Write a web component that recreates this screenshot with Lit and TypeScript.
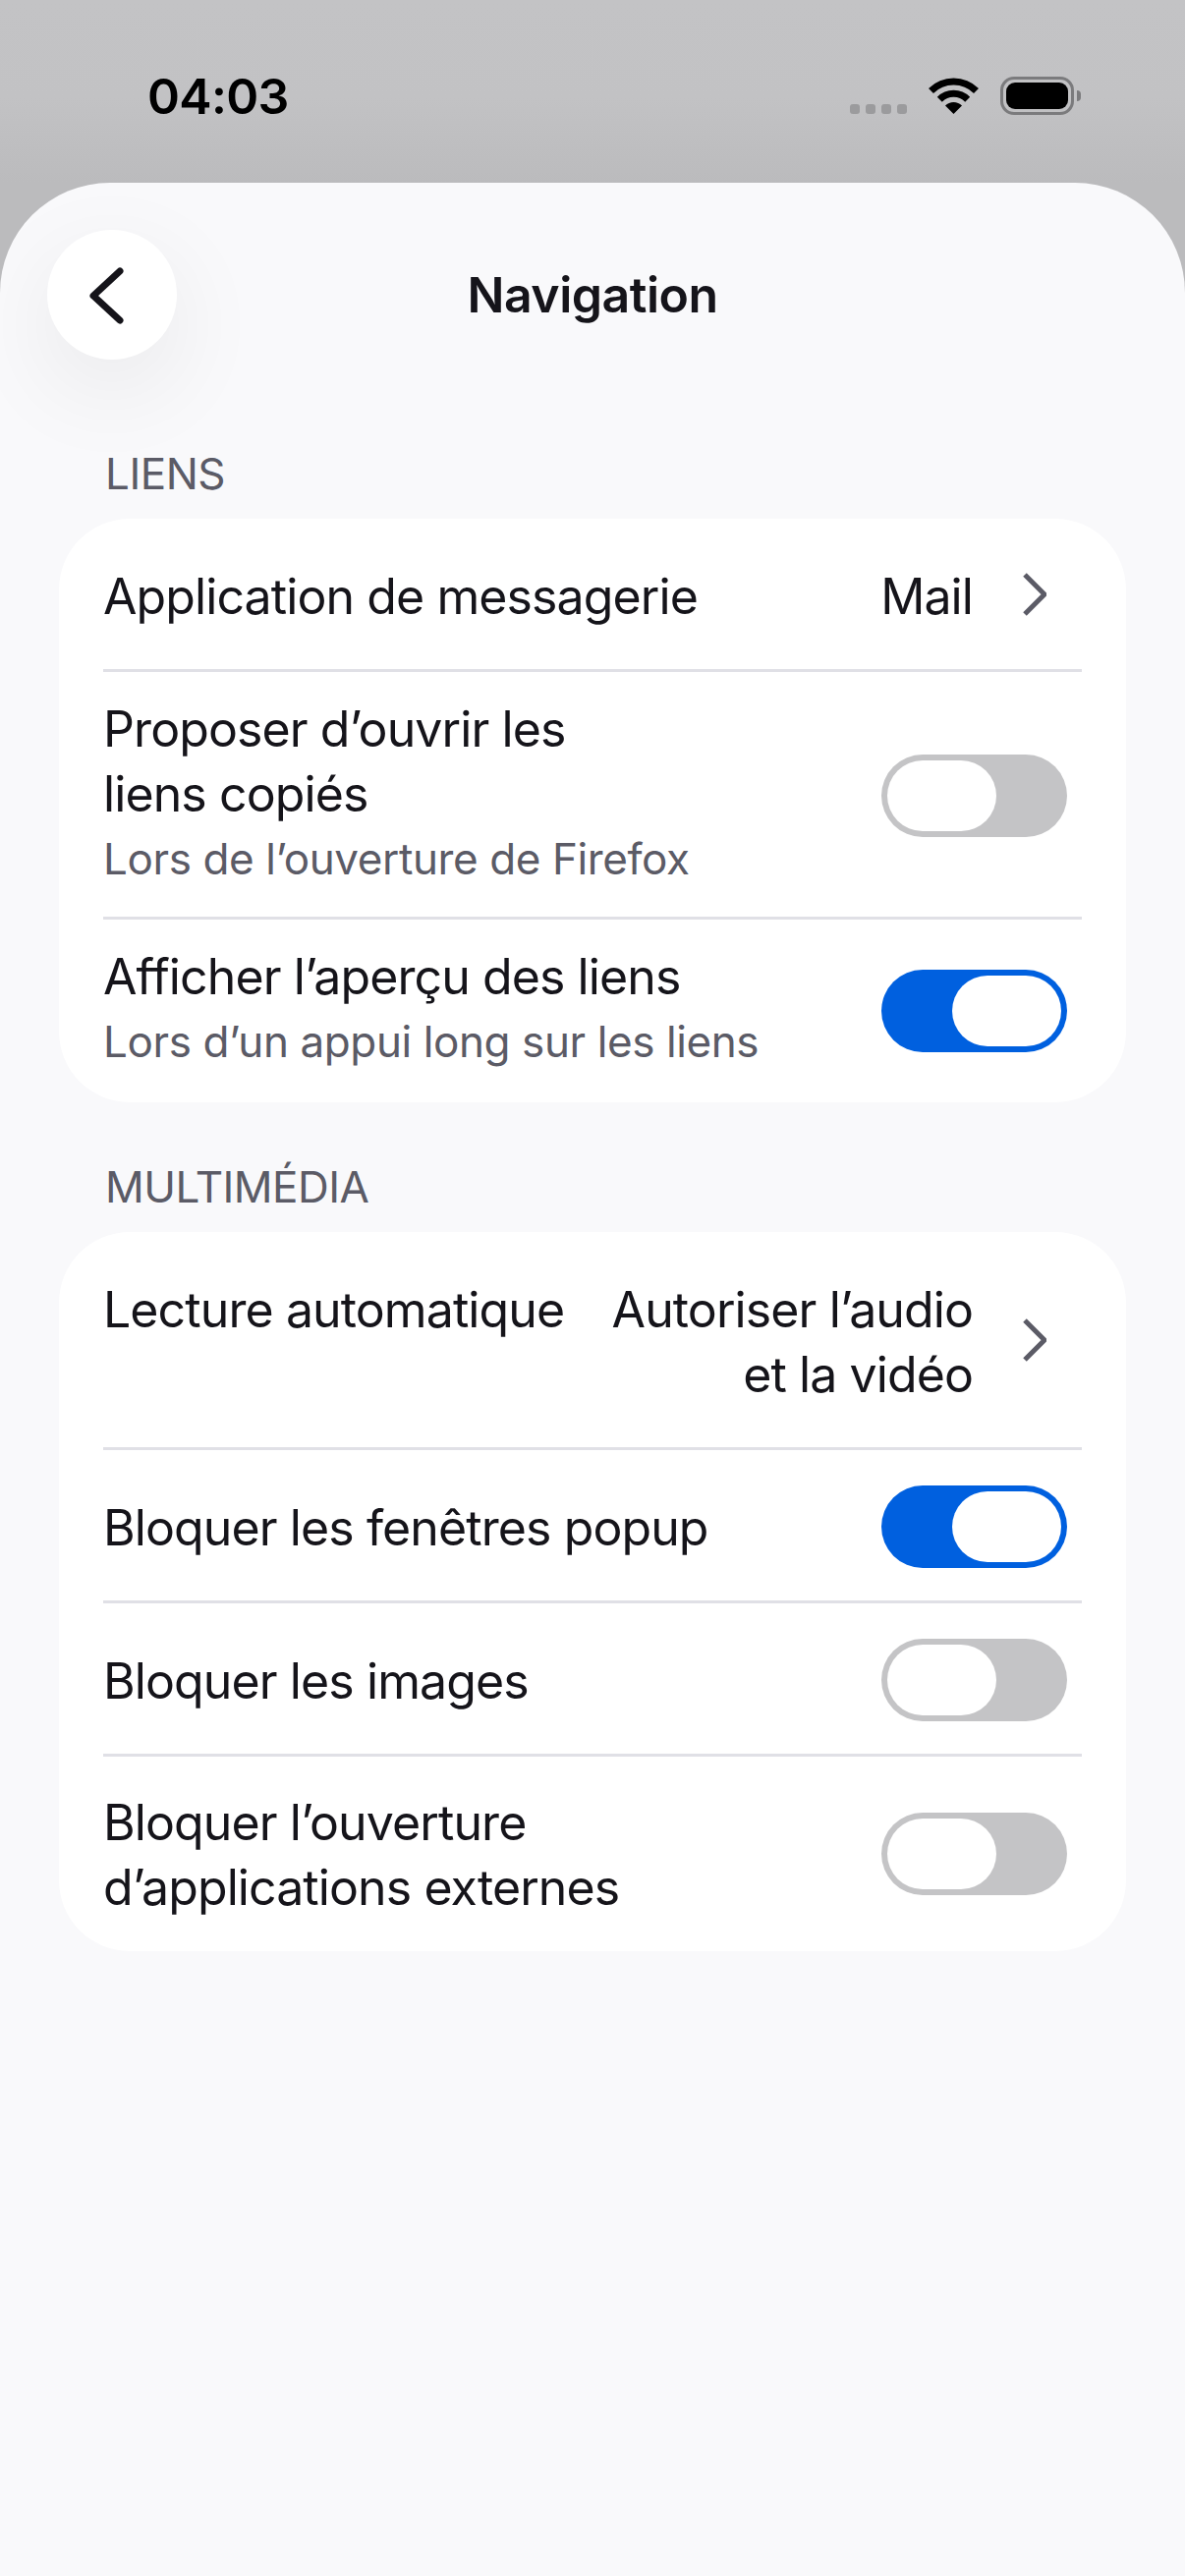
import { LitElement, html, css, nothing } from 'lit'
import { customElement } from 'lit/decorators.js'

// One settings row. `pad` picks the vertical padding, which differs per row in the reference.
type Row = {
  title: string
  sub?: string
  value?: string
  toggle?: boolean
  pad?: 'slim' | 'mid'
}

const SECTIONS: { label: string; rows: Row[] }[] = [
  {
    label: 'LIENS',
    rows: [
      { title: 'Application de messagerie', value: 'Mail' },
      { title: 'Proposer d’ouvrir les\nliens copiés', sub: 'Lors de l’ouverture de Firefox', toggle: false, pad: 'slim' },
      { title: 'Afficher l’aperçu des liens', sub: 'Lors d’un appui long sur les liens', toggle: true, pad: 'slim' },
    ],
  },
  {
    label: 'MULTIMÉDIA',
    rows: [
      { title: 'Lecture automatique', value: 'Autoriser l’audio\net la vidéo' },
      { title: 'Bloquer les fenêtres popup', toggle: true },
      { title: 'Bloquer les images', toggle: false },
      { title: 'Bloquer l’ouverture\nd’applications externes', toggle: false, pad: 'mid' },
    ],
  },
]

@customElement('app-root')
export class AppRoot extends LitElement {
  static styles = css`
    :host {
      display: block;
      width: 1206px;
      height: 2622px;
      overflow: hidden;
      font-family: Inter, "Liberation Sans", sans-serif;
      color: #15141a;
      background: linear-gradient(#c3c3c5, #c2c2c4 100px, #bbbbbd 186px);
    }

    /* ---- Status bar ---- */
    .status {
      height: 186px;
      box-sizing: border-box;
      display: flex;
      justify-content: space-between;
      padding: 72px 106px 0 150px;
    }
    .time {
      font-size: 50px;
      font-weight: 600;
      line-height: 52px;
      letter-spacing: -0.7px;
      color: #000;
    }
    .status-icons {
      display: flex;
      align-items: flex-end;
      height: 45px;
    }
    .dots { display: flex; gap: 6px; margin-right: 22px; margin-bottom: 1px; }
    .dots i { width: 10px; height: 10px; border-radius: 3px; background: #9b9b9d; }
    .wifi { display: block; width: 51px; height: 37px; margin-right: 22px; margin-bottom: 1px; }
    .battery { display: flex; align-items: center; gap: 3px; }
    .battery-body {
      box-sizing: border-box;
      width: 75px;
      height: 39px;
      padding: 3px;
      border: 3px solid #7b7b7d;
      border-radius: 14px;
    }
    .battery-fill { height: 100%; border-radius: 9px; background: #000; }
    .battery-cap { width: 4px; height: 11px; border-radius: 0 4px 4px 0; background: #7b7b7d; }

    /* ---- Sheet ---- */
    .sheet {
      height: 2436px;
      overflow: hidden;
      border-radius: 112px 112px 0 0;
      background: #f9f9fb;
    }
    .header {
      display: grid;
      grid-template-columns: 132px 1fr 132px;
      align-items: center;
      padding: 48px 48px 0;
    }
    .back {
      width: 132px;
      height: 132px;
      border-radius: 50%;
      background: #fff;
      box-shadow: 0 30px 100px rgba(0, 0, 0, 0.07);
    }
    .back svg { display: block; }
    .title {
      text-align: center;
      font-size: 50px;
      font-weight: 600;
      line-height: 66px;
      letter-spacing: -0.5px;
    }

    /* ---- Sections ---- */
    .content {
      display: flex;
      flex-direction: column;
      gap: 61px;
      padding: 91px 60px 0;
    }
    .label {
      margin: 0 0 21px 47px;
      font-size: 44px;
      line-height: 50px;
      letter-spacing: -0.5px;
      color: #5b5b66;
    }
    .card {
      border-radius: 72px;
      background: #fff;
      padding: 0 45px;
    }
    .row {
      display: flex;
      align-items: center;
      justify-content: space-between;
      gap: 40px;
      border-top: 3px solid #e0e0e6;
    }
    .row:first-child { border-top: none; }

    /* The row height comes from the text column; the toggle stays centred in it. */
    .text {
      align-self: flex-start;
      padding: 46px 0 41px;
    }
    .row.slim .text { padding: 25px 0 26px; }
    .row.slim:last-child .text { padding-bottom: 29px; }
    .row.mid .text { padding: 34px 0 32px; }
    .row-title {
      font-size: 50px;
      line-height: 66px;
      letter-spacing: -0.9px;
      white-space: pre;
    }
    .row-sub {
      font-size: 44px;
      line-height: 66px;
      letter-spacing: -0.4px;
      color: #5b5b66;
    }
    .trail {
      display: flex;
      align-items: center;
      gap: 50px;
      padding-right: 36px;
    }
    .value {
      padding: 46px 0 41px;
      font-size: 50px;
      line-height: 66px;
      letter-spacing: -0.9px;
      text-align: right;
      white-space: pre;
    }
    .chevron { display: block; width: 25px; height: 46px; flex: none; }

    /* ---- Toggle ---- */
    .toggle {
      box-sizing: border-box;
      flex: none;
      display: flex;
      width: 189px;
      height: 84px;
      margin: 3px 15px 0 0;
      padding: 6px;
      border-radius: 42px;
      background: #c4c4c6;
    }
    .row:last-child .toggle { margin-top: 0; }
    .toggle.on {
      justify-content: flex-end;
      background: #0060df;
    }
    .thumb {
      width: 111px;
      height: 72px;
      border-radius: 36px;
      background: #fff;
    }
  `

  private renderToggle(on: boolean) {
    return html`<span class="toggle ${on ? 'on' : ''}"><span class="thumb"></span></span>`
  }

  private renderRow(row: Row) {
    return html`
      <div class="row ${row.pad ?? ''}">
        <div class="text">
          <div class="row-title">${row.title}</div>
          ${row.sub ? html`<div class="row-sub">${row.sub}</div>` : nothing}
        </div>
        ${row.value
          ? html`
              <div class="trail">
                <div class="value">${row.value}</div>
                <svg class="chevron" viewBox="0 0 25 46" fill="none" stroke="#5b5b66" stroke-width="5">
                  <path d="M3 3l20 20L3 43" />
                </svg>
              </div>
            `
          : this.renderToggle(!!row.toggle)}
      </div>
    `
  }

  render() {
    return html`
      <div class="status">
        <div class="time">04:03</div>
        <div class="status-icons">
          <div class="dots"><i></i><i></i><i></i><i></i></div>
          <svg class="wifi" viewBox="0 0 51 37" fill="none" stroke="#000" stroke-width="7">
            <path d="M2.5 13.5a32.5 32.5 0 0 1 46 0" />
            <path d="M11.3 22.2a20 20 0 0 1 28.4 0" />
            <path d="M25.5 37L17 28.5a12 12 0 0 1 17 0z" fill="#000" stroke="none" />
          </svg>
          <div class="battery">
            <div class="battery-body"><div class="battery-fill"></div></div>
            <div class="battery-cap"></div>
          </div>
        </div>
      </div>
      <div class="sheet">
        <div class="header">
          <div class="back">
            <svg width="132" height="132" viewBox="0 0 132 132" fill="none" stroke="#15141a" stroke-width="7" stroke-linecap="round" stroke-linejoin="round">
              <path d="M74 42L47 67l27 25" />
            </svg>
          </div>
          <div class="title">Navigation</div>
        </div>
        <div class="content">
          ${SECTIONS.map(
            (s) => html`
              <section>
                <div class="label">${s.label}</div>
                <div class="card">${s.rows.map((r) => this.renderRow(r))}</div>
              </section>
            `,
          )}
        </div>
      </div>
    `
  }
}
